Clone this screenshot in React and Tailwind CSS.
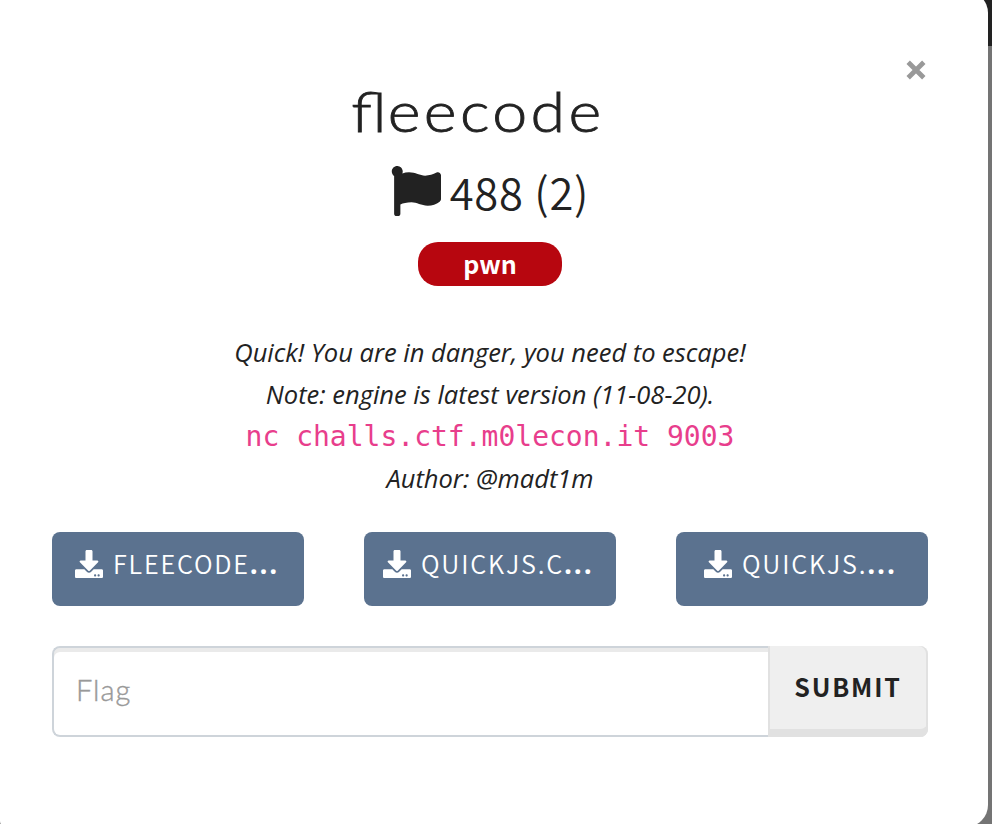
import React from "react";
import { FaDownload, FaFlag } from "react-icons/fa";

const files = [
  { name: "FLEECODE", shift: "pl-[23px]" },
  { name: "QUICKJS.C", shift: "pl-[19px]" },
  { name: "QUICKJS.", shift: "pl-[28px]" },
];

const sans = "font-['Noto_Sans_CJK_SC',sans-serif]";

function FileButton({ file }) {
  return (
    <button className={`flex h-[74px] w-[252px] items-start rounded-[8px] bg-[#5b728f] pt-[17px] text-white ${file.shift}`}>
      <FaDownload className="mt-px size-7 shrink-0" />
      <span className="ml-[10px] whitespace-nowrap text-[25.2px] font-[350] leading-[28px] tracking-[1.8px]">
        {file.name}
      </span>
      <span className="font-['Open_Sans',sans-serif] text-[28px] font-bold leading-[28px] tracking-[1.8px]">...</span>
    </button>
  );
}

export default function App() {
  return (
    <div className={`flex h-[824px] w-[992px] items-end overflow-hidden bg-[linear-gradient(#222_0_46px,#747474_46px)] text-[#222] ${sans}`}>
      <main className="-mb-[3px] flex h-[836px] w-[988px] shrink-0 flex-col rounded-[22px] rounded-bl-[6px] rounded-tl-none bg-white pl-[52px] pr-[60px] pt-[9px]">
        <div className="flex h-[80px] justify-end pt-[60px]">
          <svg className="mr-[2px] size-[20px]" viewBox="0 0 20 20" fill="none" stroke="#999" strokeWidth="4.8">
            <path d="M2.2 2.2 17.8 17.8M17.8 2.2 2.2 17.8" />
          </svg>
        </div>
        <h1 className="h-[80px] origin-center -translate-x-[12px] scale-x-[1.12] text-center font-['Lato',sans-serif] text-[56px] font-light leading-[62px] tracking-[3px] [-webkit-text-stroke:0.8px_#222]">
          <span className="tracking-normal">fl</span><span className="pl-px">eecode</span>
        </h1>
        <h2 className="flex h-[82px] items-start justify-center pt-[6px] text-[43.5px] font-[350] leading-[52px]">
          <FaFlag className="mr-[9px] size-[50px]" />
          <span className="tracking-[0.8px]">488 (2)</span>
        </h2>
        <div className="mx-auto flex h-[44px] w-[144px] items-center justify-center rounded-[20px] bg-[#b7060f] text-[25px] font-bold leading-[42px] text-white">
          <span className="-mt-[2px]">pwn</span>
        </div>
        <div className="mt-[45px] h-[201px] text-center font-['Open_Sans',sans-serif] text-[25.5px] italic leading-[42px]">
          <p>Quick! You are in danger, you need to escape!</p>
          <p>Note: engine is latest version (11-08-20).</p>
          <p className="font-['DejaVu_Sans_Mono',monospace] text-[28px] not-italic text-[#e83e8c]"><span className="relative top-px">nc challs.ctf.m0lecon.it 9003</span></p>
          <p>Author: @madt1m</p>
        </div>
        <div className="flex justify-between">
          {files.map((file) => <FileButton key={file.name} file={file} />)}
        </div>
        <form className="mt-[40px] flex h-[91px]">
          <input
            placeholder="Flag"
            className="h-full w-[716px] rounded-l-[8px] border-2 border-r-0 border-[#ced4da] bg-white px-[22px] pb-[5px] font-['Lato',sans-serif] text-[29px] font-light tracking-[1px] shadow-[inset_0_4px_0_#eaeaea] placeholder:text-[#999] [-webkit-text-stroke:0.4px_#999]"
          />
          <button type="button" className="h-full w-[160px] rounded-r-[8px] bg-[#efefef] pb-[10px] text-[25px] font-bold tracking-[1.8px] shadow-[inset_0_-8px_0_#e1e1e1,inset_2px_0_0_#e1e1e1,inset_-2px_0_0_#e1e1e1]">SUBMIT</button>
        </form>
      </main>
    </div>
  );
}
